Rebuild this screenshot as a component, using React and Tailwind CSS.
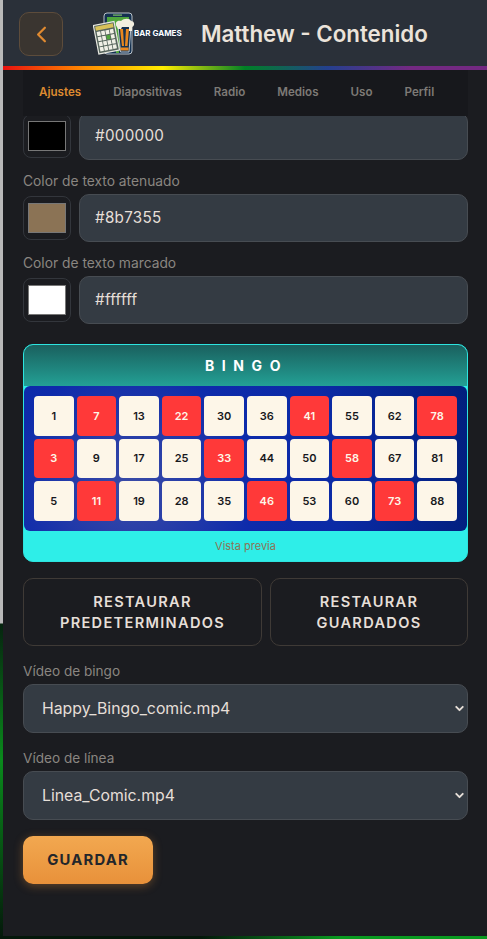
import { ChevronLeft, ChevronDown } from "lucide-react"

const font = { fontFamily: "Inter, 'Noto Sans', sans-serif" }

const tabs = ["Ajustes", "Diapositivas", "Radio", "Medios", "Uso", "Perfil"]

const rows = [
    [[1], [7, 1], [13], [22, 1], [30], [36], [41, 1], [55], [62], [78, 1]],
    [[3, 1], [9], [17], [25], [33, 1], [44], [50], [58, 1], [67], [81]],
    [[5], [11, 1], [19], [28], [35], [46, 1], [53], [60], [73, 1], [88]]
]

function Logo() {
    return (
        <div className="relative w-[90px] h-[44px] shrink-0">
            <svg viewBox="0 0 90 44" className="w-full h-full">
                <rect x="11" y="1" width="28" height="41" rx="3" fill="#14304f" stroke="#dfe5e8" strokeWidth="0.8" />
                <rect x="14" y="5" width="22" height="31" fill="#4fa53c" />
                <rect x="20" y="2.5" width="9" height="1.2" fill="#7fc06a" />
                <rect x="23" y="38" width="3" height="3" fill="#4fa53c" />
                <g transform="rotate(-11 15 26)">
                    <rect x="3" y="11" width="21" height="29" fill="#56645c" stroke="#e8e8e0" strokeWidth="1.2" />
                    <rect x="4.5" y="12.5" width="18" height="4" fill="#d8c25a" />
                    {[0, 1, 2, 3].map((r) =>
                        [0, 1, 2, 3].map((c) => (
                            <rect
                                key={`${r}-${c}`}
                                x={5 + c * 4.4}
                                y={18 + r * 5.2}
                                width="3.6"
                                height="4.2"
                                fill={r === 1 && c === 2 ? "#4fa53c" : "#f0f0e6"}
                            />
                        ))
                    )}
                </g>
                <path d="M25 14 L38 14 L36 40 L27.5 40 Z" fill="#14304f" stroke="#dfe5e8" strokeWidth="0.8" />
                <path d="M27 17 L30 17 L31 34 L29 34 Z" fill="#e9871f" />
                <path d="M33 17 L36 17 L34.5 34 L32 34 Z" fill="#e9871f" />
                <rect x="27.5" y="35.5" width="8" height="3" fill="#e9871f" />
                <path d="M24 15 C21 11 24 8 28 9 C31 6 37 6 38 9 C42 9 42 14 39 15 L39 19 L36 19 L36 15 L29 15 L28 17 L25 17 Z" fill="#f3efe0" />
            </svg>
            <span className="absolute left-[41px] top-[16px] whitespace-nowrap text-[8px] leading-[11px] font-bold text-white [text-shadow:0_0_2px_#14304f,0_0_1px_#14304f]">
                BAR GAMES
            </span>
        </div>
    )
}

function ColorRow({ color, swatch }) {
    return (
        <div className="flex gap-2 h-12 items-center">
            <div className="w-12 h-11 shrink-0 rounded-lg border border-[#33363c] bg-[#1b1c20] flex items-center justify-center">
                <div className={`w-[38px] h-[30px] border border-[#777] ${swatch}`}></div>
            </div>
            <div className="flex-1 h-12 rounded-[10px] border border-[#474c52] bg-[#343b43] pl-[15px] flex items-center text-[15.2px] tracking-[0.3px] text-[#e6dfd8]">
                {color}
            </div>
        </div>
    )
}

function VideoSelect({ label, value }) {
    return (
        <div className="mt-[15px]">
            <div className="text-[13.6px] leading-[20px] text-[#8a8681] mb-[3px]">{label}</div>
            <div className="h-[49px] rounded-[10px] border border-[#474c52] bg-[#343b43] pl-[18px] pr-px flex items-center justify-between text-[15.8px] text-[#e6dfd8]">
                <span>{value}</span>
                <ChevronDown size={13} strokeWidth={3.5} className="text-[#e6dfd8]" />
            </div>
        </div>
    )
}

export default function App() {
    return (
        <div
            style={font}
            className="h-[939px] overflow-hidden pl-[3px] bg-[linear-gradient(180deg,#b9b9b9_0,#b9b9b9_623px,#06240f_624px,#0a8a1c_760px,#064d12_860px,#04170a_939px)]"
        >
            <div className="h-[936px] bg-[#1b1c20] overflow-hidden">
                {/* Header */}
                <div className="h-[66px] bg-[#2a3039] pl-4 flex items-start">
                    <button className="mt-3 w-11 h-11 rounded-[10px] border border-[#5d4c3b] bg-[#3a3530] flex items-center justify-center text-[#e08a30]">
                        <ChevronLeft size={27} strokeWidth={2} />
                    </button>
                    <div className="ml-[30px] mt-3">
                        <Logo />
                    </div>
                    <h1 className="ml-[18px] mt-[18px] text-[22.3px] leading-[32px] font-semibold whitespace-nowrap text-[#ebe3da]">
                        Matthew - Contenido
                    </h1>
                </div>
                <div className="h-1 bg-[linear-gradient(90deg,#e8110f_0%,#ff8c00_17%,#ffed00_33%,#008026_50%,#24408e_67%,#732982_84%,#732982_100%)]"></div>

                <div className="pl-5 pr-[19px]">
                    {/* Tabs */}
                    <div className="h-[46px] bg-[#17181c] flex items-center pl-4 gap-8 text-[11.6px] font-semibold text-[#7d7a76]">
                        {tabs.map((tab, i) => (
                            <span key={tab} className={i === 0 ? "text-[#dd8a30]" : ""}>
                                {tab}
                            </span>
                        ))}
                    </div>

                    {/* First row is cut off by the tab bar */}
                    <div className="h-[44px] overflow-hidden flex flex-col justify-end">
                        <div className="shrink-0">
                            <ColorRow color="#000000" swatch="bg-black" />
                        </div>
                    </div>

                    <div className="mt-[11px] text-[13.8px] leading-[20px] text-[#8a8681] mb-[3px]">Color de texto atenuado</div>
                    <ColorRow color="#8b7355" swatch="bg-[#8b7355]" />

                    <div className="mt-[11px] text-[13.8px] leading-[20px] text-[#8a8681] mb-[3px]">Color de texto marcado</div>
                    <ColorRow color="#ffffff" swatch="bg-white" />

                    {/* Preview */}
                    <div className="mt-5 rounded-[10px] border border-[#2de4df] overflow-hidden bg-[#2eeee8]">
                        <div className="h-[41px] pl-[2px] bg-[linear-gradient(180deg,#1a605e,#23a095)] flex items-center justify-center text-[14px] font-bold tracking-[7.6px] text-white">
                            BINGO
                        </div>
                        <div className="rounded-[6px] h-[145px] p-[10px] grid grid-cols-10 grid-rows-3 gap-[3px] bg-[radial-gradient(circle_at_24%_70%,#3a4ba6_0,#0e2bab_35%,#0b2aa5_60%,#011f7c_100%)]">
                            {rows.flat().map(([n, hit]) => (
                                <div
                                    key={n}
                                    className={`rounded-[4px] flex items-center justify-center text-[11px] font-semibold ${
                                        hit ? "bg-[#ff3939] text-[#fdf6e8]" : "bg-[#fdf6e8] text-[#17181c]"
                                    }`}
                                >
                                    {n}
                                </div>
                            ))}
                        </div>
                        <div className="h-[30px] flex items-center justify-center text-[11px] text-[#8b7355]">
                            Vista previa
                        </div>
                    </div>

                    {/* Restore buttons */}
                    <div className="mt-4 grid grid-cols-[239px_1fr] gap-2 text-[14.6px] leading-[21px] font-semibold tracking-[1.3px] text-[#e6dfd8] text-center">
                        <button className="h-[68px] pt-px rounded-[10px] border border-[#3f3a36]">
                            RESTAURAR
                            <br />
                            PREDETERMINADOS
                        </button>
                        <button className="h-[68px] pt-px rounded-[10px] border border-[#3f3a36]">
                            RESTAURAR
                            <br />
                            GUARDADOS
                        </button>
                    </div>

                    <VideoSelect label="Vídeo de bingo" value="Happy_Bingo_comic.mp4" />
                    <VideoSelect label="Vídeo de línea" value="Linea_Comic.mp4" />

                    <button className="mt-4 w-[130px] h-12 rounded-[10px] bg-[linear-gradient(180deg,#f2a850,#e8913a)] shadow-[0_2px_10px_rgba(232,145,58,0.35)] text-[14.8px] font-bold tracking-[1.2px] text-[#23262b]">
                        GUARDAR
                    </button>
                </div>
            </div>
            <div className="h-[3px] -ml-[3px] bg-[linear-gradient(90deg,#04170a_0,#04170a_200px,#0a9a20_340px,#0a9a20_487px)]"></div>
        </div>
    )
}
